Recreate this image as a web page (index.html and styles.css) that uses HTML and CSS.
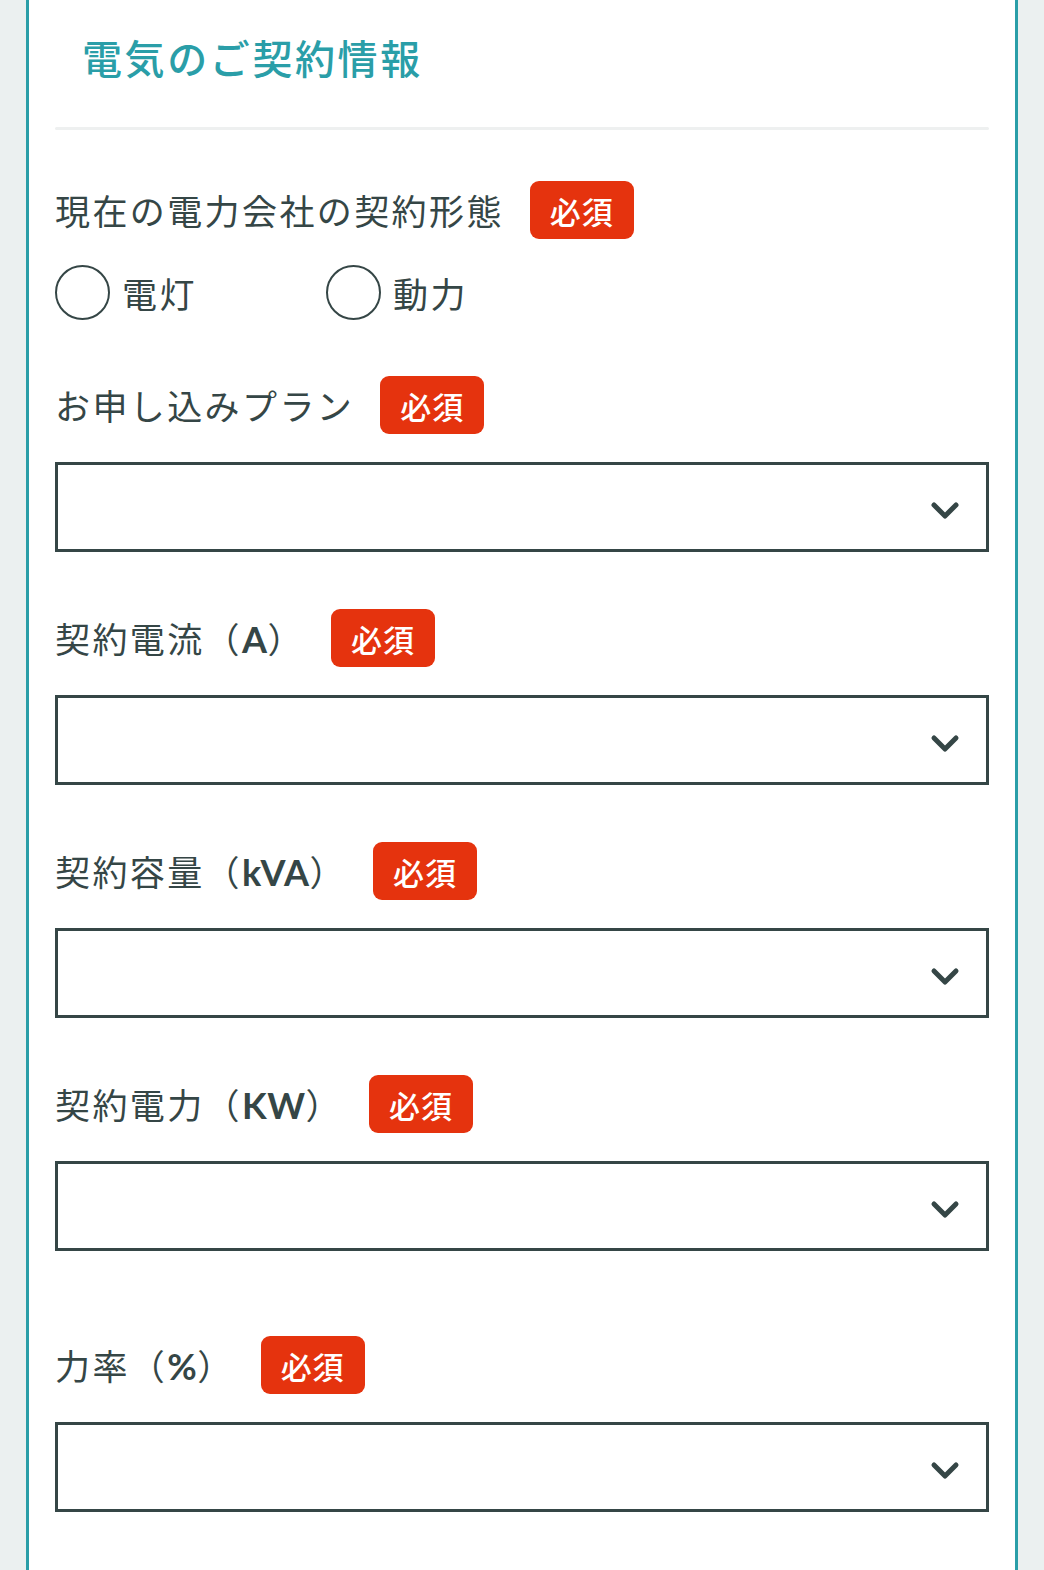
FILE: index.html
```html
<!DOCTYPE html>
<html lang="ja">
<head>
<meta charset="utf-8">
<link rel="stylesheet" href="styles.css">
</head>
<body>
<div class="card">
  <h1 class="heading">電気のご契約情報</h1>
  <div class="divider"></div>

  <div class="label-row first">
    <span class="label">現在の電力会社の契約形態</span>
    <span class="badge">必須</span>
  </div>
  <div class="radios">
    <label class="radio"><span class="circle"></span><span class="radio-text">電灯</span></label>
    <label class="radio"><span class="circle"></span><span class="radio-text">動力</span></label>
  </div>

  <div class="label-row after-radio">
    <span class="label">お申し込みプラン</span>
    <span class="badge">必須</span>
  </div>
  <div class="select"><svg class="chev" viewBox="0 0 30 20" width="30" height="20"><path d="M4 4 L15 15 L26 4" fill="none" stroke="#354646" stroke-width="5" stroke-linecap="round" stroke-linejoin="round"/></svg></div>

  <div class="label-row">
    <span class="label">契約電流（<span class="lat">A</span>）</span>
    <span class="badge">必須</span>
  </div>
  <div class="select"><svg class="chev" viewBox="0 0 30 20" width="30" height="20"><path d="M4 4 L15 15 L26 4" fill="none" stroke="#354646" stroke-width="5" stroke-linecap="round" stroke-linejoin="round"/></svg></div>

  <div class="label-row">
    <span class="label">契約容量（<span class="lat">kVA</span>）</span>
    <span class="badge">必須</span>
  </div>
  <div class="select"><svg class="chev" viewBox="0 0 30 20" width="30" height="20"><path d="M4 4 L15 15 L26 4" fill="none" stroke="#354646" stroke-width="5" stroke-linecap="round" stroke-linejoin="round"/></svg></div>

  <div class="label-row">
    <span class="label">契約電力（<span class="lat">KW</span>）</span>
    <span class="badge">必須</span>
  </div>
  <div class="select"><svg class="chev" viewBox="0 0 30 20" width="30" height="20"><path d="M4 4 L15 15 L26 4" fill="none" stroke="#354646" stroke-width="5" stroke-linecap="round" stroke-linejoin="round"/></svg></div>

  <div class="label-row wide-gap">
    <span class="label">力率（<span class="lat">%</span>）</span>
    <span class="badge">必須</span>
  </div>
  <div class="select"><svg class="chev" viewBox="0 0 30 20" width="30" height="20"><path d="M4 4 L15 15 L26 4" fill="none" stroke="#354646" stroke-width="5" stroke-linecap="round" stroke-linejoin="round"/></svg></div>
</div>
</body>
</html>
```

FILE: styles.css
```css
html, body {
  margin: 0;
  padding: 0;
}
body {
  background: #ebf0f0;
  font-family: "Noto Sans CJK JP", "Noto Sans", sans-serif;
  color: #354646;
}
.card {
  margin: 0 26px 0 26px;
  border-left: 3px solid #2a9ea8;
  border-right: 3px solid #2a9ea8;
  background: #ffffff;
  padding: 0 26px 60px;
  min-height: 1570px;
  box-sizing: border-box;
  display: flex;
  flex-direction: column;
}
.heading {
  margin: 0;
  padding: 33px 0 0 27px;
  font-size: 40px;
  line-height: 48px;
  font-weight: 500;
  letter-spacing: 2.6px;
  color: #2a9ea8;
}
.divider {
  margin-top: 46px;
  height: 3px;
  border-radius: 2px;
  background: #eef0f0;
}
.label-row {
  display: flex;
  align-items: center;
  gap: 26px;
  height: 58px;
  margin-top: 57px;
}
.label-row.first { margin-top: 51px; }
.label-row.after-radio { margin-top: 56px; }
.label-row.wide-gap { margin-top: 85px; }
.label {
  font-size: 35px;
  line-height: 40px;
  letter-spacing: 2.4px;
  color: #354646;
}
.lat {
  font-family: Lato, "Noto Sans", sans-serif;
  font-weight: 700;
  font-size: 36px;
  letter-spacing: 0.5px;
}
.badge {
  display: flex;
  align-items: center;
  justify-content: center;
  width: 104px;
  height: 58px;
  border-radius: 9px;
  background: #e5330e;
  color: #ffffff;
  font-size: 31px;
  font-weight: 500;
  letter-spacing: 1px;
}
.radios {
  display: flex;
  margin-top: 25px;
  height: 56px;
}
.radio {
  display: flex;
  align-items: center;
  width: 271px;
}
.circle {
  width: 51px;
  height: 51px;
  border: 2.5px solid #354646;
  border-radius: 50%;
  flex: none;
}
.radio-text {
  margin-left: 12px;
  font-size: 35px;
  letter-spacing: 2.4px;
}
.select {
  margin-top: 28px;
  height: 90px;
  border: 3px solid #354646;
  box-sizing: border-box;
  display: flex;
  align-items: center;
  justify-content: flex-end;
  padding-right: 26px;
}
.chev {
  display: block;
  margin-top: 8px;
}
```
